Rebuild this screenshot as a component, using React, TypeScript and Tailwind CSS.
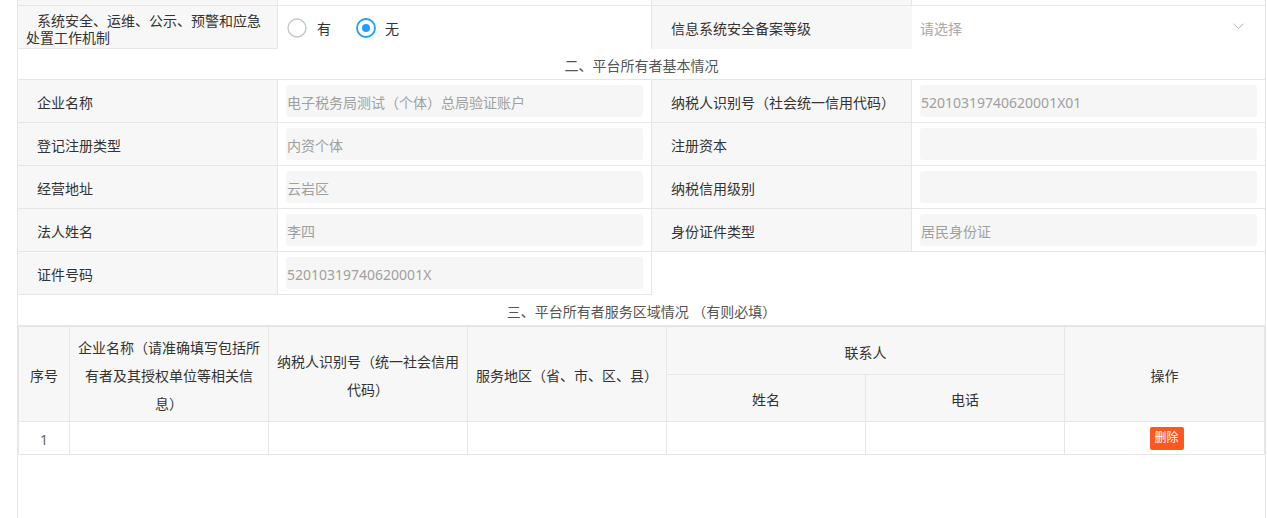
import React from "react";

const B = "border-[#e6e6e6]";

function Radio({ checked }: { checked?: boolean }) {
  return (
    <svg width="20" height="20" viewBox="0 0 20 20" className="shrink-0">
      <circle cx="10" cy="10" r="9" fill="white" stroke={checked ? "#1e9fff" : "#c6c6c6"} strokeWidth={checked ? 1.8 : 1.4} />
      {checked && <circle cx="10" cy="10" r="4" fill="#1e9fff" />}
    </svg>
  );
}

function Label({ children }: { children: React.ReactNode }) {
  return (
    <div className="flex items-center border-r border-[#e6e6e6] bg-[#f7f7f7] pl-[19px] text-[14px] text-[#333] pt-[2px]">
      {children}
    </div>
  );
}

function Field({ value, last }: { value?: string; last?: boolean }) {
  return (
    <div className={`flex items-center px-[8px] ${last ? "" : "border-r border-[#e6e6e6]"}`}>
      <div className="flex h-[32px] w-full items-center rounded-[3px] bg-[#f6f6f6] pl-[1px] pt-[2px] text-[14px] text-[#a0a0a0]">
        {value}
      </div>
    </div>
  );
}

const rows: [string, string, string, string][] = [
  ["企业名称", "电子税务局测试（个体）总局验证账户", "纳税人识别号（社会统一信用代码）", "52010319740620001X01"],
  ["登记注册类型", "内资个体", "注册资本", ""],
  ["经营地址", "云岩区", "纳税信用级别", ""],
  ["法人姓名", "李四", "身份证件类型", "居民身份证"],
];

const cols = "grid grid-cols-[260px_374px_260px_353px]";

export default function App() {
  return (
    <div className="h-[518px] w-[1267px] overflow-hidden bg-white font-['Noto_Sans','Noto_Sans_CJK_SC',sans-serif]">
      <div className={`ml-[17px] h-[518px] w-[1249px] border-x ${B}`}>
        {/* top sliver of previous row */}
        <div className={`${cols} h-[6px] border-b ${B}`}>
          <div className={`border-r ${B} bg-[#f7f7f7]`} />
          <div className={`border-r ${B}`} />
          <div className={`border-r ${B} bg-[#f7f7f7]`} />
          <div />
        </div>
        {/* row 1 */}
        <div className={`${cols} h-[43px]`}>
          <div className={`flex items-center border-r border-b ${B} bg-[#f7f7f7] pl-[8px] pr-[11px] pt-[3px] text-[14px] leading-[17px] text-[#333]`}>
            <div className="indent-[11px]">系统安全、运维、公示、预警和应急处置工作机制</div>
          </div>
          <div className={`flex items-center border-r ${B} pl-[9px] text-[14px] text-[#333]`}>
            <div className="flex items-center gap-[10px]">
              <Radio />
              <span className="pt-[1px]">有</span>
            </div>
            <div className="ml-[25px] flex items-center gap-[9px]">
              <Radio checked />
              <span className="pt-[1px]">无</span>
            </div>
          </div>
          <div className="flex items-center bg-[#f7f7f7] pl-[19px] pt-[2px] text-[14px] text-[#333]">
            信息系统安全备案等级
          </div>
          <div className="flex items-center justify-between pl-[8px] pr-[21px]">
            <span className="pt-[2px] text-[14px] text-[#a8a8a8]">请选择</span>
            <svg width="11" height="7" viewBox="0 0 11 7" className="-mt-[3px]">
              <polyline points="0.5,0.8 5.5,5.5 10.5,0.8" fill="none" stroke="#b4b4b4" strokeWidth="1" />
            </svg>
          </div>
        </div>
        {/* section title 2 */}
        <div className={`flex h-[31px] items-center justify-center border-b ${B} pt-[3px] text-[14px] text-[#555]`}>
          二、平台所有者基本情况
        </div>
        {rows.map((r) => (
          <div key={r[0]} className={`${cols} h-[43px] border-b ${B}`}>
            <Label>{r[0]}</Label>
            <Field value={r[1]} />
            <Label>{r[2]}</Label>
            <Field value={r[3]} last />
          </div>
        ))}
        <div className={`${cols} h-[43px]`}>
          <div className={`flex items-center border-r border-b ${B} bg-[#f7f7f7] pl-[19px] pt-[2px] text-[14px] text-[#333]`}>
            证件号码
          </div>
          <div className={`flex items-center border-r border-b ${B} px-[8px]`}>
            <div className="flex h-[32px] w-full items-center rounded-[3px] bg-[#f6f6f6] pl-[1px] pt-[2px] text-[14px] text-[#a0a0a0]">
              52010319740620001X
            </div>
          </div>
          <div />
          <div />
        </div>
        {/* section title 3 */}
        <div className={`flex h-[31px] items-center justify-center border-b ${B} pt-[3px] text-[14px] text-[#555]`}>
          三、平台所有者服务区域情况 （有则必填）
        </div>
        {/* table */}
        <div className={`grid grid-cols-[51px_199px_199px_199px_199px_199px_200px] grid-rows-[48px_47px_33px] border-l border-t ${B} text-[14px] text-[#333]`}>
          <div className={`col-start-1 row-start-1 row-span-2 flex items-center justify-center border-r border-b ${B} bg-[#f7f7f7] pt-[3px]`}>序号</div>
          <div className={`col-start-2 row-start-1 row-span-2 flex items-center justify-center border-r border-b ${B} bg-[#f7f7f7] px-[7px] pt-[3px] text-center leading-[28px]`}>
            企业名称（请准确填写包括所有者及其授权单位等相关信息）
          </div>
          <div className={`col-start-3 row-start-1 row-span-2 flex items-center justify-center border-r border-b ${B} bg-[#f7f7f7] px-[7px] pt-[3px] text-center leading-[28px]`}>
            纳税人识别号（统一社会信用代码）
          </div>
          <div className={`col-start-4 row-start-1 row-span-2 flex items-center justify-center border-r border-b ${B} bg-[#f7f7f7] px-[7px] pt-[3px] text-center`}>
            服务地区（省、市、区、县）
          </div>
          <div className={`col-start-5 col-span-2 row-start-1 flex items-center justify-center border-r border-b ${B} bg-[#f7f7f7] pt-[3px]`}>联系人</div>
          <div className={`col-start-7 row-start-1 row-span-2 flex items-center justify-center border-r border-b ${B} bg-[#f7f7f7] pt-[3px]`}>操作</div>
          <div className={`col-start-5 row-start-2 flex items-center justify-center border-r border-b ${B} bg-[#f7f7f7] pt-[3px]`}>姓名</div>
          <div className={`col-start-6 row-start-2 flex items-center justify-center border-r border-b ${B} bg-[#f7f7f7] pt-[3px]`}>电话</div>
          <div className={`col-start-1 row-start-3 flex items-center justify-center border-r border-b ${B} pt-[3px] text-[#666]`}>1</div>
          <div className={`col-start-2 row-start-3 border-r border-b ${B}`} />
          <div className={`col-start-3 row-start-3 border-r border-b ${B}`} />
          <div className={`col-start-4 row-start-3 border-r border-b ${B}`} />
          <div className={`col-start-5 row-start-3 border-r border-b ${B}`} />
          <div className={`col-start-6 row-start-3 border-r border-b ${B}`} />
          <div className={`col-start-7 row-start-3 flex items-center justify-center border-r border-b ${B}`}>
            <button className="ml-[4px] flex h-[23px] w-[34px] items-center justify-center rounded-[2px] bg-[#ff5722] text-[12px] text-white">
              删除
            </button>
          </div>
        </div>
      </div>
    </div>
  );
}
